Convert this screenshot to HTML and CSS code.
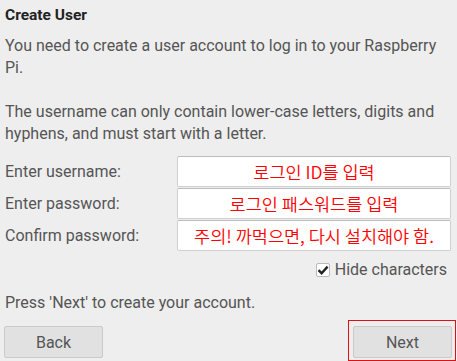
FILE: index.html
```html
<!DOCTYPE html>
<html lang="en">
<head>
    <meta charset="UTF-8">
    <meta name="viewport" content="width=device-width, initial-scale=1.0">
    <title>Create User</title>
    <link rel="stylesheet" href="styles.css">
</head>
<body>
    <div class="dialog">
        <h1>Create User</h1>
        <p class="intro">You need to create a user account to log in to your Raspberry Pi.<br><br>The username can only contain lower-case letters, digits and hyphens, and must start with a letter.</p>

        <div class="fields">
            <label for="username">Enter username:</label>
            <input type="text" id="username" value="로그인 ID를 입력">
            <label for="password">Enter password:</label>
            <input type="text" id="password" value="로그인 패스워드를 입력">
            <label for="confirm">Confirm password:</label>
            <input type="text" id="confirm" value="주의! 까먹으면, 다시 설치해야 함.">
        </div>

        <div class="hide-row">
            <label class="check">
                <span class="box">
                    <svg width="12" height="12" viewBox="0 0 12 12"><path d="M1.5 6.2 L4.6 9.2 L10.6 2.6" fill="none" stroke="#222" stroke-width="2.4"/></svg>
                </span>
                Hide characters
            </label>
        </div>

        <p class="note">Press 'Next' to create your account.</p>

        <div class="buttons">
            <button type="button">Back</button>
            <span class="marked"><button type="button">Next</button></span>
        </div>
    </div>
</body>
</html>
```

FILE: styles.css
```css
body {
    margin: 0;
    background-color: #eeeeee;
    font-family: Roboto, "Noto Sans", sans-serif;
    color: #555;
}

.dialog {
    padding: 4px 6px 0 5px;
}

h1 {
    margin: 0;
    font-size: 15.5px;
    line-height: 22px;
    font-weight: bold;
    color: #222;
}

.intro {
    margin: 9px 0 0;
    font-size: 16px;
    line-height: 22px;
}

.fields {
    display: grid;
    grid-template-columns: 172px 1fr;
    row-gap: 1px;
    margin-top: 11px;
    align-items: center;
}

.fields label {
    font-size: 16px;
}

.fields input {
    height: 31px;
    box-sizing: border-box;
    width: 100%;
    margin: 0;
    padding: 0 2px;
    border: 1px solid #cfcfcf;
    border-top-color: #bdbdbd;
    border-radius: 2px;
    background: #fff;
    color: #ff0000;
    font-family: "Malgun Gothic", "Noto Sans CJK KR", sans-serif;
    font-weight: 350;
    font-size: 17.5px;
    text-align: center;
}

.hide-row {
    display: flex;
    justify-content: flex-end;
    margin-top: 8px;
    padding-right: 4px;
}

.check {
    display: flex;
    align-items: center;
    gap: 5px;
    font-size: 16px;
    line-height: 22px;
}

.box {
    width: 12px;
    height: 12px;
    border: 1px solid #bbb;
    border-radius: 2px;
    background: #fff;
    display: flex;
    align-items: center;
    justify-content: center;
}

.note {
    margin: 11px 0 0;
    font-size: 16px;
    line-height: 22px;
}

.buttons {
    display: flex;
    justify-content: space-between;
    align-items: flex-end;
    margin-top: 6px;
}

button {
    width: 99px;
    height: 32px;
    border: 1px solid #cacaca;
    border-radius: 2px;
    background: #e1e1e1;
    color: #555;
    font-family: inherit;
    font-size: 16px;
}

.buttons > button {
    margin-bottom: 3px;
    margin-left: -1px;
}

.marked {
    display: block;
    border: 1px solid #e01010;
    padding: 5px 3px 2px 4px;
    margin-right: -5px;
}
```
